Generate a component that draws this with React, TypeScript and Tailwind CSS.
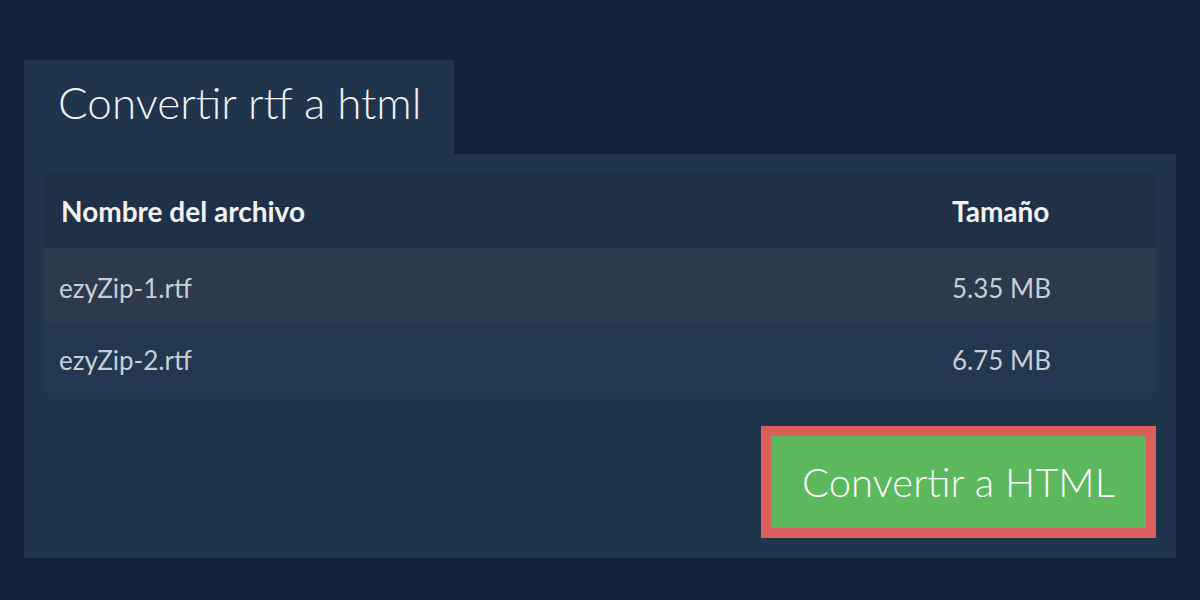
import React from "react";

export default function App() {
  const rows = [
    { name: "ezyZip-1.rtf", size: "5.35 MB", cls: "h-[74px] bg-[#2c3a4b]" },
    { name: "ezyZip-2.rtf", size: "6.75 MB", cls: "h-[71px] bg-[#243750]" },
  ];
  return (
    <div
      className="w-[1200px] h-[600px] bg-[#10233a] pt-[60px] px-6"
      style={{ fontFamily: "Lato, 'Open Sans', sans-serif" }}
    >
      <div className="w-[430px] h-[94px] bg-[#20344c] pl-[34px] pt-[14px]">
        <h1 className="text-[44px] font-light text-[#f2f2f2] leading-[56px]">Convertir rtf a html</h1>
      </div>
      <div className="bg-[#20344c] px-5 pt-5 pb-5 flex flex-col">
        <div className="flex flex-col">
          <div className="grid grid-cols-[1fr_221px] h-[74px] items-center bg-[#1f3147] text-[28px] font-bold text-[#f2f2f2]">
            <div className="pl-[17px]">Nombre del archivo</div>
            <div className="pl-[17px]">Tamaño</div>
          </div>
          {rows.map((r) => (
            <div
              key={r.name}
              className={`grid grid-cols-[1fr_221px] items-center pt-[6px] ${r.cls} text-[26px] text-[#c9ced4]`}
            >
              <div className="pl-[15px]">{r.name}</div>
              <div className="pl-[17px]">{r.size}</div>
            </div>
          ))}
        </div>
        <div className="flex justify-end mt-[33px]">
          <button className="w-[395px] h-[112px] border-[10px] border-[#db5f5c] bg-[#5cb85c] text-white text-[40px] font-light">
            Convertir a HTML
          </button>
        </div>
      </div>
    </div>
  );
}
